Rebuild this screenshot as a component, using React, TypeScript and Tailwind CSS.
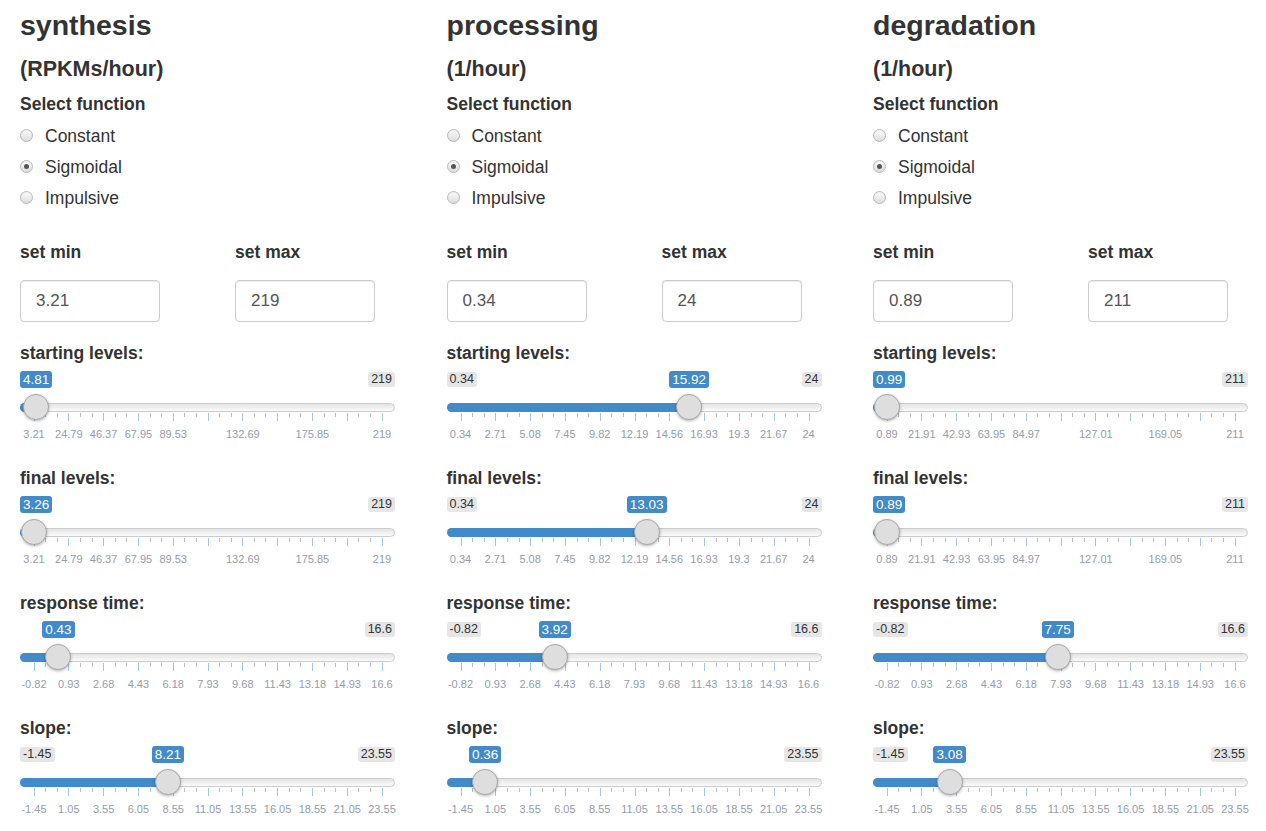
import React from 'react';

type SliderSpec = {
  label: string;
  min: number;
  max: number;
  value: number;
  ticks: (string | null)[];
};

type ColumnSpec = {
  title: string;
  unit: string;
  setMin: string;
  setMax: string;
  sliders: SliderSpec[];
};

const W = 375;
const PAD = 13.5;
const SPAN = W - PAD * 2;

// rough Arial digit widths, good enough to clamp the value bubbles
function textW(s: string, size: number) {
  let w = 0;
  for (const c of s) w += c === '.' ? 0.278 : c === '-' ? 0.333 : 0.556;
  return w * size;
}

const respTicks = ['-0.82', '0.93', '2.68', '4.43', '6.18', '7.93', '9.68', '11.43', '13.18', '14.93', '16.6'];
const slopeTicks = ['-1.45', '1.05', '3.55', '6.05', '8.55', '11.05', '13.55', '16.05', '18.55', '21.05', '23.55'];
const synthTicks = ['3.21', '24.79', '46.37', '67.95', '89.53', null, '132.69', null, '175.85', null, '219'];
const procTicks = ['0.34', '2.71', '5.08', '7.45', '9.82', '12.19', '14.56', '16.93', '19.3', '21.67', '24'];
const degTicks = ['0.89', '21.91', '42.93', '63.95', '84.97', null, '127.01', null, '169.05', null, '211'];

const columns: ColumnSpec[] = [
  {
    title: 'synthesis',
    unit: '(RPKMs/hour)',
    setMin: '3.21',
    setMax: '219',
    sliders: [
      { label: 'starting levels:', min: 3.21, max: 219, value: 4.81, ticks: synthTicks },
      { label: 'final levels:', min: 3.21, max: 219, value: 3.26, ticks: synthTicks },
      { label: 'response time:', min: -0.82, max: 16.6, value: 0.43, ticks: respTicks },
      { label: 'slope:', min: -1.45, max: 23.55, value: 8.21, ticks: slopeTicks },
    ],
  },
  {
    title: 'processing',
    unit: '(1/hour)',
    setMin: '0.34',
    setMax: '24',
    sliders: [
      { label: 'starting levels:', min: 0.34, max: 24, value: 15.92, ticks: procTicks },
      { label: 'final levels:', min: 0.34, max: 24, value: 13.03, ticks: procTicks },
      { label: 'response time:', min: -0.82, max: 16.6, value: 3.92, ticks: respTicks },
      { label: 'slope:', min: -1.45, max: 23.55, value: 0.36, ticks: slopeTicks },
    ],
  },
  {
    title: 'degradation',
    unit: '(1/hour)',
    setMin: '0.89',
    setMax: '211',
    sliders: [
      { label: 'starting levels:', min: 0.89, max: 211, value: 0.99, ticks: degTicks },
      { label: 'final levels:', min: 0.89, max: 211, value: 0.89, ticks: degTicks },
      { label: 'response time:', min: -0.82, max: 16.6, value: 7.75, ticks: respTicks },
      { label: 'slope:', min: -1.45, max: 23.55, value: 3.08, ticks: slopeTicks },
    ],
  },
];

function Slider({ label, min, max, value, ticks }: SliderSpec) {
  const center = PAD + ((value - min) / (max - min)) * SPAN;
  const tipW = textW(String(value), 13.5) + 6;
  const tipLeft = Math.min(Math.max(center - tipW / 2, 0), W - tipW);
  const minW = textW(String(min), 12.5) + 6;
  const maxW = textW(String(max), 12.5) + 6;
  const showMin = tipLeft > minW + 2;
  const showMax = tipLeft + tipW < W - maxW - 2;

  const step = SPAN / 10;
  const small: number[] = [];
  for (let i = 0; i < 10; i++) {
    small.push(PAD + i * step + step / 3, PAD + i * step + (2 * step) / 3);
  }

  return (
    <div className="mb-[25px]">
      <div className="mb-[7px] text-[17.5px] leading-[20px] font-bold">{label}</div>
      <div className="relative h-[73px] w-[375px]">
        {showMin && (
          <span className="absolute left-0 top-[2px] h-[15px] rounded-[3px] bg-[#e6e6e6] px-[3px] text-[12.5px] leading-[15px] text-[#333]">
            {min}
          </span>
        )}
        {showMax && (
          <span className="absolute right-0 top-[2px] h-[15px] rounded-[3px] bg-[#e6e6e6] px-[3px] text-[12.5px] leading-[15px] text-[#333]">
            {max}
          </span>
        )}
        <span
          className="absolute top-[1px] h-[17px] rounded-[3px] bg-[#428bca] px-[3px] text-[13.5px] leading-[17px] text-white"
          style={{ left: tipLeft }}
        >
          {value}
        </span>

        <div className="absolute left-0 top-[33px] h-[9px] w-full rounded-full border border-[#cccccc] bg-gradient-to-b from-[#e4e4e4] to-[#fbfbfb]" />
        <div
          className="absolute left-0 top-[33px] h-[9px] rounded-l-full bg-[#428bca]"
          style={{ width: center }}
        />

        {ticks.map((_, i) => (
          <div
            key={'M' + i}
            className="absolute top-[43px] h-[8px] w-px bg-[#a3c5e4]"
            style={{ left: Math.round(PAD + i * step) }}
          />
        ))}
        {small.map((x, i) => (
          <div
            key={'s' + i}
            className="absolute top-[43px] h-[4px] w-px bg-[#bdbdbd]"
            style={{ left: Math.round(x) }}
          />
        ))}
        {ticks.map((t, i) =>
          t ? (
            <span
              key={'t' + i}
              className="absolute top-[58px] -translate-x-1/2 whitespace-nowrap text-[11px] leading-[13px] text-[#929dab]"
              style={{ left: PAD + i * step + 0.5 }}
            >
              {t}
            </span>
          ) : null
        )}

        <div
          className="absolute top-[24px] h-[26px] w-[26px] -translate-x-1/2 rounded-full border border-[#a9a9a9] bg-[#dedede] shadow-[0_1px_3px_rgba(0,0,0,0.3)]"
          style={{ left: center }}
        />
      </div>
    </div>
  );
}

function Radio({ label, checked }: { label: string; checked?: boolean }) {
  return (
    <div className="flex h-[31px] items-center">
      <span className="flex h-[13px] w-[13px] items-center justify-center rounded-full border border-[#b9b9b9] bg-gradient-to-b from-[#fdfdfd] to-[#dcdcdc] shadow-[inset_0_1px_1px_rgba(0,0,0,0.05)]">
        {checked && <span className="h-[5px] w-[5px] rounded-full bg-[#555]" />}
      </span>
      <span className="ml-[12px] text-[17.5px] leading-[20px]">{label}</span>
    </div>
  );
}

function NumField({ label, value }: { label: string; value: string }) {
  return (
    <div>
      <div className="text-[17.5px] leading-[20px] font-bold">{label}</div>
      <input
        readOnly
        value={value}
        className="mt-[18px] block h-[42px] w-[140px] rounded-[4px] border border-[#cccccc] pl-[15px] text-[17px] text-[#555] shadow-[inset_0_1px_1px_rgba(0,0,0,0.075)] outline-none"
      />
    </div>
  );
}

function Column({ title, unit, setMin, setMax, sliders }: ColumnSpec) {
  return (
    <div className="flex flex-col">
      <h3 className="pt-[10px] text-[28.5px] leading-[31px] font-bold">{title}</h3>
      <h4 className="mt-[16px] text-[21.5px] leading-[24px] font-bold">{unit}</h4>
      <div className="mt-[13px] text-[17.5px] leading-[20px] font-bold">Select function</div>
      <div className="mt-[6px] flex flex-col">
        <Radio label="Constant" />
        <Radio label="Sigmoidal" checked />
        <Radio label="Impulsive" />
      </div>
      <div className="mt-[29px] grid grid-cols-[215px_215px]">
        <NumField label="set min" value={setMin} />
        <NumField label="set max" value={setMax} />
      </div>
      <div className="mt-[21px]">
        {sliders.map((s) => (
          <Slider key={s.label} {...s} />
        ))}
      </div>
    </div>
  );
}

export default function App() {
  return (
    <div className="h-[831px] w-[1266px] overflow-hidden bg-white pl-[20px] font-['Liberation_Sans',Arial,sans-serif] text-[#333]">
      <div className="grid grid-cols-[426.5px_426.5px_1fr]">
        {columns.map((c) => (
          <Column key={c.title} {...c} />
        ))}
      </div>
    </div>
  );
}
